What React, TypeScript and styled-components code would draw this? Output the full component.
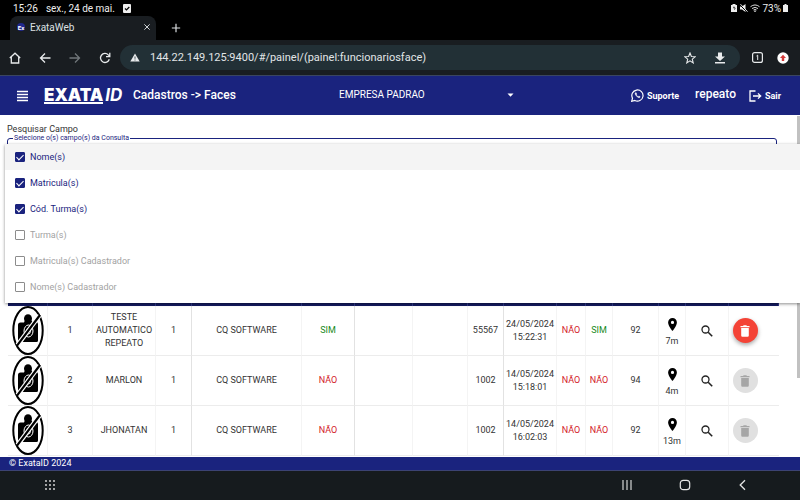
import React from "react";
import styled, { createGlobalStyle, css } from "styled-components";

const NAVY = "#1a237e";
const CHROME = "#191d21";

const GlobalStyle = createGlobalStyle`
  * { box-sizing: border-box; }
  html, body { margin: 0; background: #fff; }
  body, button, input, select { font-family: Roboto, "Liberation Sans", sans-serif; }
  button { padding: 0; border: 0; background: none; color: inherit; cursor: pointer; }
  svg { display: block; flex: none; }
`;

const Screen = styled.div`
  min-height: 100vh;
  display: flex;
  flex-direction: column;
  color: #333;
  font-size: 9px;
`;

const StatusBar = styled.div`
  display: flex;
  align-items: center;
  gap: 8px;
  height: 16px;
  padding: 0 12px 0 13px;
  background: #000;
  color: #eee;
  font-size: 10px;
`;

const StatusIcons = styled.div`
  display: flex;
  align-items: center;
  gap: 2px;
  margin-left: auto;
`;

const TabStrip = styled.div`
  display: flex;
  align-items: center;
  height: 24px;
  padding-left: 10px;
  background: #000;
  color: #dde1e4;
`;

const Tab = styled.div`
  display: flex;
  align-items: center;
  gap: 5px;
  width: 146px;
  height: 24px;
  padding: 0 5px 2px 7px;
  border-radius: 8px 8px 0 0;
  background: ${CHROME};
  font-size: 10px;
`;

const TabName = styled.span`
  flex: 1;
`;

const Favicon = styled.span`
  display: grid;
  place-items: center;
  width: 8px;
  height: 8px;
  border-radius: 4px;
  background: #20288c;
  color: #fff;
  font-size: 6px;
  font-weight: 700;
`;

const NewTab = styled.button`
  margin-left: 15px;
`;

const Toolbar = styled.div`
  display: flex;
  align-items: center;
  gap: 18px;
  height: 36px;
  padding: 0 11px 0 9px;
  border-bottom: 1px solid #3a4560;
  background: ${CHROME};
  color: #e4e7e9;
`;

const ToolButton = styled.button<{ $dim?: boolean }>`
  color: ${(p) => (p.$dim ? "#70767a" : "#e8eaec")};
`;

const NavButtons = styled.div`
  display: flex;
  gap: 18px;
`;

const AddressBar = styled.form`
  flex: 1;
  display: flex;
  align-items: center;
  gap: 10px;
  height: 25px;
  margin-left: -9px;
  padding: 0 14px 0 10px;
  border-radius: 13px;
  background: #223036;
`;

const AddressInput = styled.input`
  flex: 1;
  min-width: 0;
  padding: 0;
  border: 0;
  outline: 0;
  background: transparent;
  color: #e1e5e7;
  font-size: 11px;
`;

const StarWrap = styled.div`
  display: flex;
  gap: 18px;
`;

const RightTools = styled.div`
  display: flex;
  align-items: center;
  gap: 14px;
  margin-left: -6px;
`;

const AppHeader = styled.header`
  display: flex;
  align-items: center;
  height: 39px;
  padding: 0 19px 0 16px;
  background: ${NAVY};
  color: #fff;
`;

const Brand = styled.div`
  flex: 0 0 323px;
  display: flex;
  align-items: center;
`;

const Logo = styled.div`
  display: flex;
  align-items: center;
  width: 89px;
  height: 18px;
  margin-left: 15px;
  font-family: Inter, sans-serif;
  font-size: 17px;
  line-height: 18px;
`;

const LogoBold = styled.span`
  border-bottom: 2px solid #fff;
  font-weight: 900;
  line-height: 14px;
`;

const LogoItalic = styled.span`
  margin-left: 2px;
  padding-bottom: 2px;
  font-style: italic;
  font-weight: 700;
`;

const Title = styled.h1`
  margin: 0;
  padding-bottom: 1px;
  font-size: 12px;
  font-weight: 500;
`;

const CompanyPicker = styled.div`
  flex: 0 1 175px;
  display: flex;
  align-items: center;
`;

const CompanySelect = styled.select`
  flex: 1;
  min-width: 0;
  padding: 0 0 3px;
  border: 0;
  appearance: none;
  background: transparent;
  color: #fff;
  font-size: 10px;
`;

const Account = styled.nav`
  display: flex;
  align-items: center;
  gap: 13px;
  margin-left: auto;
`;

const HeaderLink = styled.a`
  display: flex;
  align-items: center;
  gap: 3px;
  color: #fff;
  font-size: 9px;
  font-weight: 700;
  text-decoration: none;
`;

const UserName = styled.span`
  margin-left: 3px;
  padding-bottom: 3px;
  font-size: 12px;
  font-weight: 500;
`;

const Main = styled.main`
  position: relative;
  flex: 1;
  padding: 9px 23px 0 7px;
  background: #fff;
`;

const ScrollThumb = styled.div`
  position: absolute;
  top: 1px;
  right: 0;
  width: 3px;
  height: 262px;
  background: #c1c1c1;
`;

const SearchLabel = styled.div`
  font-size: 9px;
  line-height: 10px;
`;

const SearchField = styled.div`
  position: relative;
`;

const Outline = styled.fieldset`
  height: 40px;
  margin: 0;
  padding: 0 5px;
  border: 1px solid ${NAVY};
  border-radius: 3px;
`;

const OutlineLegend = styled.legend`
  padding: 0 1px;
  color: ${NAVY};
  font-size: 7px;
  line-height: 8px;
`;

const Menu = styled.div`
  position: absolute;
  z-index: 2;
  top: 10px;
  left: -2px;
  right: -23px;
  padding-bottom: 3px;
  background: #fff;
  box-shadow: 0 1px 3px rgba(0, 0, 0, 0.45);
`;

const Option = styled.label<{ $active?: boolean; $on: boolean }>`
  display: flex;
  align-items: center;
  gap: 5px;
  height: 26px;
  padding-left: 10px;
  background: ${(p) => (p.$active ? "#f4f4f4" : "#fff")};
  color: ${(p) => (p.$on ? NAVY : "#a2a2a2")};
  font-size: 9px;
`;

const Tick = styled.input`
  display: grid;
  place-items: center;
  width: 10px;
  height: 10px;
  margin: 0;
  appearance: none;
  border: 1px solid #8c8c8c;
  border-radius: 1px;
  &:checked {
    border-color: ${NAVY};
    background: ${NAVY};
  }
  &:checked::after {
    content: "";
    width: 3px;
    height: 6px;
    margin-bottom: 2px;
    border: solid #fff;
    border-width: 0 1px 1px 0;
    transform: rotate(45deg);
  }
`;

const Table = styled.table`
  width: calc(100% - 1px);
  margin: 106px 0 0 1px;
  border-collapse: separate;
  border-spacing: 0;
  table-layout: fixed;
  line-height: 13px;
  text-align: center;
`;

const HeadCell = styled.th`
  height: 26px;
  padding: 0;
  border-right: 1px solid #323a8c;
  background: #141b62;
`;

const Cell = styled.td<{ $line?: boolean; $tone?: "yes" | "no" }>`
  height: 50px;
  padding: 0;
  border-right: 1px solid ${(p) => (p.$line ? "#e2e2e2" : "#f4f4f4")};
  border-bottom: 1px solid #ececec;
  ${(p) => p.$tone === "yes" && css`color: #178a1c;`}
  ${(p) => p.$tone === "no" && css`color: #d3222a;`}
  &:last-child { border-right: 0; }
  & > svg { margin: 0 auto; }
`;

const Place = styled.a`
  display: flex;
  flex-direction: column;
  align-items: center;
  gap: 4px;
  padding-top: 4px;
  color: #333;
  text-decoration: none;
`;

const LookButton = styled.button`
  vertical-align: middle;
`;

const DeleteButton = styled.button`
  display: inline-grid;
  place-items: center;
  width: 25px;
  height: 25px;
  margin-right: 18px;
  border-radius: 50%;
  background: #f44336;
  color: #fff;
  box-shadow: 0 2px 4px rgba(0, 0, 0, 0.35);
  vertical-align: middle;
  &:disabled {
    background: #e0e0e0;
    color: #a6a6a6;
    box-shadow: none;
  }
`;

const Footer = styled.footer`
  height: 14px;
  padding-left: 9px;
  border-bottom: 1px solid #3c4373;
  background: ${NAVY};
  color: #fff;
  font-size: 9px;
  line-height: 13px;
`;

const SystemNav = styled.nav`
  display: flex;
  align-items: center;
  gap: 46px;
  height: 29px;
  padding: 0 51px 1px 44px;
  background: #161b1e;
  color: #e6e6e6;
`;

const AppsButton = styled.button`
  margin-right: auto;
`;

type StrokeIconProps = { d: string; size?: number; width?: number };

const StrokeIcon = ({ d, size = 12, width = 1.3 }: StrokeIconProps) => (
  <svg width={size} height={size} viewBox="0 0 12 12" fill="none" stroke="currentColor" strokeWidth={width} aria-hidden="true">
    <path d={d} />
  </svg>
);

const NoPhoto = () => (
  <svg width="32" height="49" viewBox="0 0 32 49" role="img" aria-label="Sem foto">
    <ellipse cx="16" cy="24.500" rx="14.700" ry="23.500" fill="#fff" stroke="#000" strokeWidth="2" />
    <ellipse cx="16" cy="12.500" rx="4" ry="4.300" fill="#000" />
    <path d="M6 19q0-2.500 2.500-2.500H12L13 14h6l1.500 2h3.500q2 0 2 2v16.500q0 1.500-1.500 1.500h-17Q6 36 6 34.500z" fill="#000" />
    <ellipse cx="16.500" cy="25" rx="4.500" ry="6" fill="none" stroke="#fff" strokeWidth="1" />
    <ellipse cx="16.500" cy="25" rx="2" ry="3" fill="none" stroke="#fff" strokeWidth=".8" />
    <path d="M5.500 39 27.500 9.500" stroke="#fff" strokeWidth="4.600" />
    <path d="M5 39.700 28 9" stroke="#000" strokeWidth="2.200" />
  </svg>
);

const Pin = () => (
  <svg width="9" height="13" viewBox="0 0 9 13" aria-hidden="true">
    <path fill="#000" fillRule="evenodd" d="M4.500 0A4.400 4.400 0 0 0 .1 4.400C.1 7.700 4.500 13 4.500 13s4.400-5.300 4.400-8.600A4.400 4.400 0 0 0 4.500 0m0 6a1.600 1.600 0 1 1 0-3.200 1.600 1.600 0 0 1 0 3.200" />
  </svg>
);

const Trash = () => (
  <svg width="10" height="12" viewBox="0 0 10 12" fill="currentColor" aria-hidden="true">
    <path d="M.5 1h2.500l.7-.8h2.600L7 1h2.500v1.200h-9zM1.200 3h7.600v7.600q0 1.200-1.200 1.200H2.400q-1.200 0-1.200-1.200z" />
  </svg>
);

const options = [
  { label: "Nome(s)", on: true },
  { label: "Matricula(s)", on: true },
  { label: "Cód. Turma(s)", on: true },
  { label: "Turma(s)", on: false },
  { label: "Matricula(s) Cadastrador", on: false },
  { label: "Nome(s) Cadastrador", on: false },
];

const columns = [
  ["Foto", 40], ["Nº", 45], ["Nome", 63], ["Faces", 36], ["Empresa", 110],
  ["Ativo", 53], ["Turma", 58], ["Cód. Turma", 55], ["Matrícula", 36], ["Data", 53],
  ["Mestre", 29], ["Válida", 27], ["Qualidade", 46], ["Local", 27], ["Ver", 43], ["Excluir", 50],
] as const;

const rows = [
  { n: 1, name: "TESTE AUTOMATICO REPEATO", active: true, reg: "55567", date: "24/05/2024", time: "15:22:31", valid: true, score: 92, dist: "7m", removable: true },
  { n: 2, name: "MARLON", active: false, reg: "1002", date: "14/05/2024", time: "15:18:01", valid: false, score: 94, dist: "4m", removable: false },
  { n: 3, name: "JHONATAN", active: false, reg: "1002", date: "14/05/2024", time: "16:02:03", valid: false, score: 92, dist: "13m", removable: false },
];

const YesNo = ({ value, line }: { value: boolean; line?: boolean }) => (
  <Cell $tone={value ? "yes" : "no"} $line={line}>{value ? "SIM" : "NÃO"}</Cell>
);

export default function App() {
  return (
    <Screen>
      <GlobalStyle />
      <StatusBar>
        <span>15:26</span>
        <span>sex., 24 de mai.</span>
        <svg width="8" height="9" viewBox="0 0 8 9"><rect width="8" height="9" rx="1" fill="#eee" /><path d="m2 4.500 1.500 1.500L6.300 3" fill="none" stroke="#000" strokeWidth="1.200" /></svg>
        <StatusIcons>
          <svg width="6" height="8" viewBox="0 0 6 8"><path d="M1.500 0h3v1H6v7H0V1h1.500z" fill="#eee" /><path d="M2 3.500a1.200 1.200 0 1 1 1 2M3 3v1.500" fill="none" stroke="#222" strokeWidth=".7" /></svg>
          <svg width="9" height="8" viewBox="0 0 9 8"><path d="M1 2.500h2L6.500 0v8L3 5.500H1z" fill="#eee" /><path d="m1 1 7 7" stroke="#000" strokeWidth="1" /><path d="m1.500 .2 7 7.500" stroke="#eee" /></svg>
          <svg width="10" height="8" viewBox="0 0 10 8" fill="none" stroke="#ddd"><path d="M.5 2.700q4.500-3.500 9 0M2 4.500q3-2.200 6 0M3.500 6q1.500-1 3 0" /><circle cx="5" cy="7.200" r=".5" /></svg>
          <span>73%</span>
          <svg width="5" height="8" viewBox="0 0 5 8"><path d="M1.500 0h2v1H5v7H0V1h1.500z" fill="#eee" /></svg>
        </StatusIcons>
      </StatusBar>

      <TabStrip>
        <Tab>
          <Favicon>Ex</Favicon>
          <TabName>ExataWeb</TabName>
          <button aria-label="Fechar guia"><StrokeIcon d="m2 2 8 8m0-8-8 8" size={8} width={1.4} /></button>
        </Tab>
        <NewTab aria-label="Nova guia"><StrokeIcon d="M6 1v10M1 6h10" size={10} width={1.4} /></NewTab>
      </TabStrip>

      <Toolbar>
        <NavButtons>
          <ToolButton aria-label="Início"><StrokeIcon d="M.8 6 6 1.200 11.200 6M2.300 5v6h7.400V5" /></ToolButton>
          <ToolButton aria-label="Voltar"><StrokeIcon d="M11.500 6H1.500M6 1.500 1.500 6 6 10.500" /></ToolButton>
          <ToolButton aria-label="Avançar" $dim><StrokeIcon d="M.5 6h10M6 1.500 10.500 6 6 10.500" /></ToolButton>
          <ToolButton aria-label="Recarregar"><StrokeIcon d="M10.300 7.300A4.500 4.500 0 1 1 9.300 2.900L10.800 4.400M10.800.8v3.800H7" /></ToolButton>
        </NavButtons>
        <AddressBar onSubmit={(e) => e.preventDefault()}>
          <svg width="10" height="9" viewBox="0 0 10 9"><path d="M5 .5 9.700 8.500H.3z" fill="#e8eaec" /><path d="M5 3.500v2.300M5 6.500v1" stroke="#223036" strokeWidth=".8" /></svg>
          <AddressInput aria-label="Endereço" defaultValue="144.22.149.125:9400/#/painel/(painel:funcionariosface)" />
          <StarWrap>
            <ToolButton type="button" aria-label="Favoritar"><StrokeIcon d="m6 1 1.400 3.500 3.800.3-2.900 2.400.9 3.700L6 8.900l-3.200 2 .9-3.700L.8 4.800l3.800-.3z" width={1.1} /></ToolButton>
            <ToolButton type="button" aria-label="Baixar"><svg width="12" height="12" viewBox="0 0 12 12" fill="currentColor"><path d="M4 .5h4v4h3L6 9 1 4.500h3zM1 10h10v1.400H1z" /></svg></ToolButton>
          </StarWrap>
        </AddressBar>
        <RightTools>
          <ToolButton aria-label="Guias abertas"><svg width="11" height="11" viewBox="0 0 11 11" fill="none" stroke="currentColor"><rect x=".6" y=".6" width="9.800" height="9.800" rx="2" strokeWidth="1.200" /><path d="M4.500 4 5.700 3.200V8" /></svg></ToolButton>
          <ToolButton aria-label="Atualizar navegador"><svg width="12" height="12" viewBox="0 0 12 12"><circle cx="6" cy="6" r="5.700" fill="#fff" /><path d="m6 2.800 3 3.200H7.200v3H4.800V6H3z" fill="#d33a3a" /></svg></ToolButton>
        </RightTools>
      </Toolbar>

      <AppHeader>
        <Brand>
          <button aria-label="Menu"><svg width="13" height="12" viewBox="0 0 13 12" stroke="#fff" strokeWidth="1.400"><path d="M1 1.500h11M1 4.500h11M1 7.500h11M1 10.500h11" /></svg></button>
          <Logo><LogoBold>EXATA</LogoBold><LogoItalic>ID</LogoItalic></Logo>
          <Title>Cadastros -&gt; Faces</Title>
        </Brand>
        <CompanyPicker>
          <CompanySelect aria-label="Empresa" defaultValue="padrao"><option value="padrao">EMPRESA PADRAO</option></CompanySelect>
          <svg width="7" height="6" viewBox="0 0 7 6"><path d="M.5.5h6l-3 3.200z" fill="#fff" /></svg>
        </CompanyPicker>
        <Account>
          <HeaderLink href="#suporte">
            <svg width="13" height="13" viewBox="0 0 13 13" fill="none" stroke="#fff"><path d="m.7 12.300.8-3.100A5.600 5.600 0 1 1 3.800 11.500z" strokeWidth="1.200" /><path d="M4.400 3.700q-.8.900.2 2.400 1.300 2 3.200 2.600 1 .2 1.400-.9L7.900 7l-.7.700Q6 7.200 5.300 5.900l.5-.7-.6-1.500z" fill="#fff" strokeWidth=".4" /></svg>
            Suporte
          </HeaderLink>
          <UserName>repeato</UserName>
          <HeaderLink href="#sair">
            <svg width="13" height="12" viewBox="0 0 13 12" fill="none" stroke="#fff" strokeWidth="1.300"><path d="M6.500 1H1v10h5.500M4 6h7.800M9 3.400 11.700 6 9 8.600" /></svg>
            Sair
          </HeaderLink>
        </Account>
      </AppHeader>

      <Main>
        <ScrollThumb />
        <SearchLabel>Pesquisar Campo</SearchLabel>
        <SearchField>
          <Outline><OutlineLegend>Selecione o(s) campo(s) da Consulta</OutlineLegend></Outline>
          <Menu role="group" aria-label="Campos da consulta">
            {options.map((o, i) => (
              <Option key={o.label} $on={o.on} $active={i === 0}>
                <Tick type="checkbox" defaultChecked={o.on} />
                {o.label}
              </Option>
            ))}
          </Menu>
        </SearchField>

        <Table>
          <colgroup>{columns.map(([name, w]) => <col key={name} width={w} />)}</colgroup>
          <thead>
            <tr>{columns.map(([name]) => <HeadCell key={name} aria-label={name} />)}</tr>
          </thead>
          <tbody>
            {rows.map((r) => (
              <tr key={r.n}>
                <Cell><NoPhoto /></Cell>
                <Cell>{r.n}</Cell>
                <Cell>{r.name}</Cell>
                <Cell $line>1</Cell>
                <Cell>CQ SOFTWARE</Cell>
                <YesNo value={r.active} line />
                <Cell />
                <Cell />
                <Cell $line>{r.reg}</Cell>
                <Cell>{r.date}<br />{r.time}</Cell>
                <YesNo value={false} />
                <YesNo value={r.valid} />
                <Cell>{r.score}</Cell>
                <Cell><Place href="#mapa"><Pin />{r.dist}</Place></Cell>
                <Cell>
                  <LookButton aria-label="Ver face"><svg width="12" height="12" viewBox="0 0 12 12" fill="none" stroke="#222" strokeWidth="1.300"><circle cx="4.500" cy="4.500" r="3.500" /><path d="m7.200 7.200 4 4" strokeWidth="1.600" /></svg></LookButton>
                </Cell>
                <Cell><DeleteButton aria-label="Excluir" disabled={!r.removable}><Trash /></DeleteButton></Cell>
              </tr>
            ))}
          </tbody>
        </Table>
      </Main>

      <Footer>© ExataID 2024</Footer>
      <SystemNav aria-label="Sistema">
        <AppsButton aria-label="Aplicativos">
          <svg width="12" height="12" viewBox="0 0 12 12" fill="currentColor">
            {[2, 6, 10].map((y) => [2, 6, 10].map((x) => <circle key={`${x}-${y}`} cx={x} cy={y} r=".9" />))}
          </svg>
        </AppsButton>
        <button aria-label="Recentes"><StrokeIcon d="M2 1v10M6 1v10M10 1v10" width={1.1} /></button>
        <button aria-label="Tela inicial"><svg width="12" height="12" viewBox="0 0 12 12" fill="none" stroke="currentColor" strokeWidth="1.200"><rect x="1.300" y="1.300" width="9.400" height="9.400" rx="3" /></svg></button>
        <button aria-label="Voltar no sistema"><StrokeIcon d="M8 1.200 3.200 6 8 10.800" /></button>
      </SystemNav>
    </Screen>
  );
}
